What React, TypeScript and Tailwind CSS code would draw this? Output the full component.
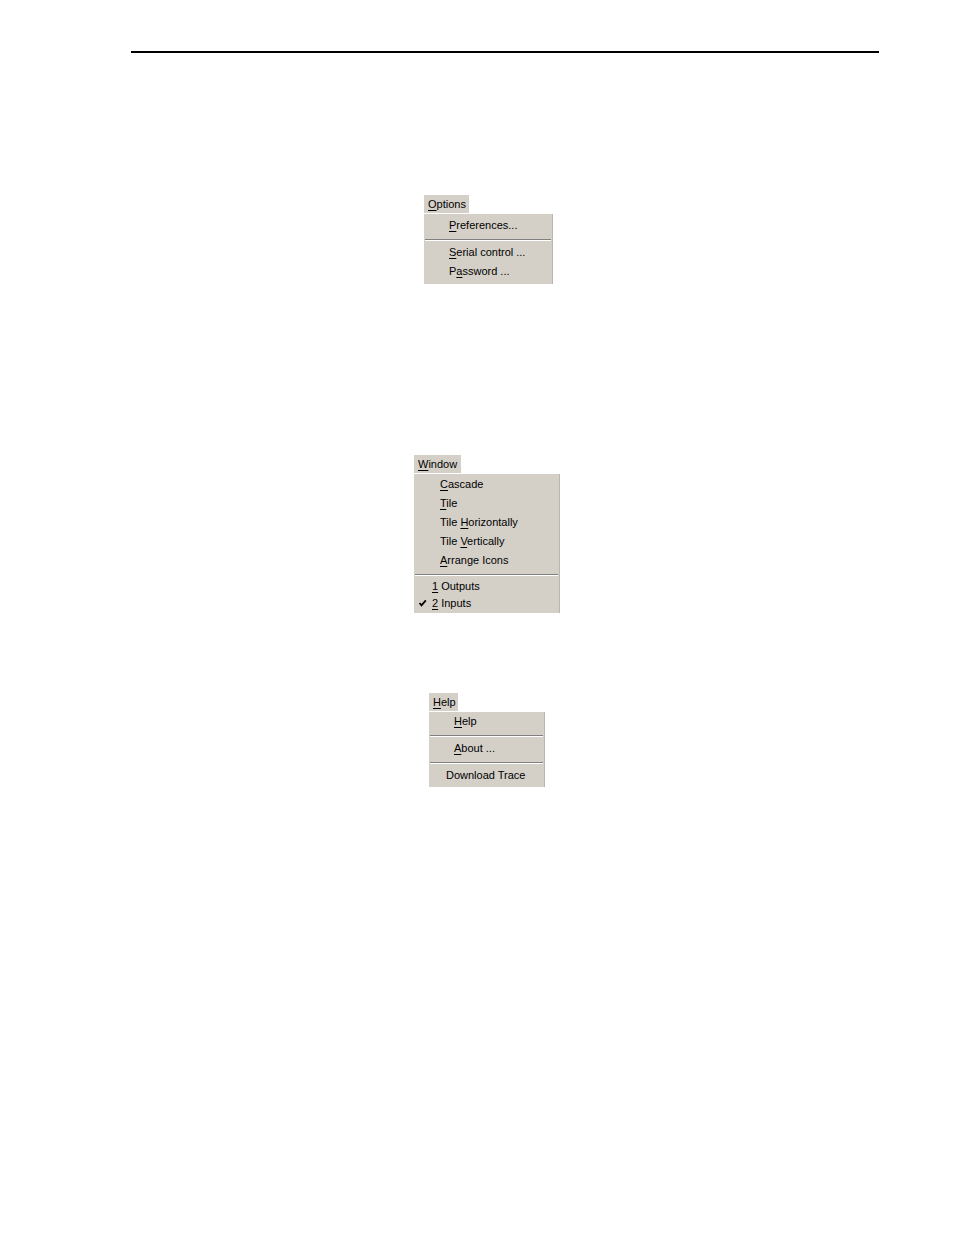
import React from 'react';

type MenuEntry =
  | { kind: 'item'; label: React.ReactNode; pad: number; h: number; checked?: boolean }
  | { kind: 'sep' };

interface MenuProps {
  left: number;
  title: React.ReactNode;
  titleWidth: number;
  width: number;
  padTop: number;
  padBottom: number;
  entries: MenuEntry[];
}

const font = { fontFamily: '"Liberation Sans", Arial, sans-serif' };

// access key letter
function K({ children }: { children: React.ReactNode }) {
  return <span className="underline underline-offset-[2px] decoration-1">{children}</span>;
}

function Check() {
  return (
    <svg width="9" height="9" viewBox="0 0 9 9" className="absolute left-[4px] top-1/2 -translate-y-1/2">
      <path d="M1.5 4.5 L3.5 6.8 L7.8 1.8" fill="none" stroke="#000" strokeWidth="1.8" />
    </svg>
  );
}

function Menu({ left, title, titleWidth, width, padTop, padBottom, entries }: MenuProps) {
  return (
    <div style={{ marginLeft: left }} className="flex flex-col text-[11px] text-black">
      <div
        style={{ width: titleWidth }}
        className="h-[18px] bg-[#d4d0c8] pl-[4px] leading-[18px]"
      >
        {title}
      </div>
      <div
        style={{ width, paddingTop: padTop, paddingBottom: padBottom }}
        className="mt-[1px] bg-[#d4d0c8] border-r border-[#b9b6ae] flex flex-col"
      >
        {entries.map((e, i) =>
          e.kind === 'sep' ? (
            <div key={i} className="h-[8px] pt-[4px] px-[1px]">
              <div className="h-px bg-[#808080]" />
              <div className="h-px bg-white" />
            </div>
          ) : (
            <div
              key={i}
              style={{ height: e.h, lineHeight: `${e.h}px`, paddingLeft: e.pad }}
              className="relative whitespace-nowrap"
            >
              {e.checked && <Check />}
              {e.label}
            </div>
          )
        )}
      </div>
    </div>
  );
}

export default function App() {
  return (
    <div className="w-[954px] h-[1235px] bg-white pt-[51px]" style={font}>
      <div className="ml-[131px] w-[748px] h-[1.5px] bg-black" />

      {/* Options */}
      <div className="mt-[142px]">
        <Menu
          left={424}
          title={<><K>O</K>ptions</>}
          titleWidth={45}
          width={129}
          padTop={2}
          padBottom={3}
          entries={[
            { kind: 'item', label: <><K>P</K>references...</>, pad: 25, h: 19 },
            { kind: 'sep' },
            { kind: 'item', label: <><K>S</K>erial control ...</>, pad: 25, h: 19 },
            { kind: 'item', label: <>P<K>a</K>ssword ...</>, pad: 25, h: 19 },
          ]}
        />
      </div>

      {/* Window */}
      <div className="mt-[171px]">
        <Menu
          left={414}
          title={<><K>W</K>indow</>}
          titleWidth={47}
          width={146}
          padTop={1}
          padBottom={1}
          entries={[
            { kind: 'item', label: <><K>C</K>ascade</>, pad: 26, h: 19 },
            { kind: 'item', label: <><K>T</K>ile</>, pad: 26, h: 19 },
            { kind: 'item', label: <>Tile <K>H</K>orizontally</>, pad: 26, h: 19 },
            { kind: 'item', label: <>Tile <K>V</K>ertically</>, pad: 26, h: 19 },
            { kind: 'item', label: <><K>A</K>rrange Icons</>, pad: 26, h: 19 },
            { kind: 'sep' },
            { kind: 'item', label: <><K>1</K> Outputs</>, pad: 18, h: 17 },
            { kind: 'item', label: <><K>2</K> Inputs</>, pad: 18, h: 17, checked: true },
          ]}
        />
      </div>

      {/* Help */}
      <div className="mt-[80px]">
        <Menu
          left={429}
          title={<><K>H</K>elp</>}
          titleWidth={29}
          width={116}
          padTop={0}
          padBottom={2}
          entries={[
            { kind: 'item', label: <><K>H</K>elp</>, pad: 25, h: 19 },
            { kind: 'sep' },
            { kind: 'item', label: <><K>A</K>bout ...</>, pad: 25, h: 19 },
            { kind: 'sep' },
            { kind: 'item', label: <>Download Trace</>, pad: 17, h: 19 },
          ]}
        />
      </div>
    </div>
  );
}
